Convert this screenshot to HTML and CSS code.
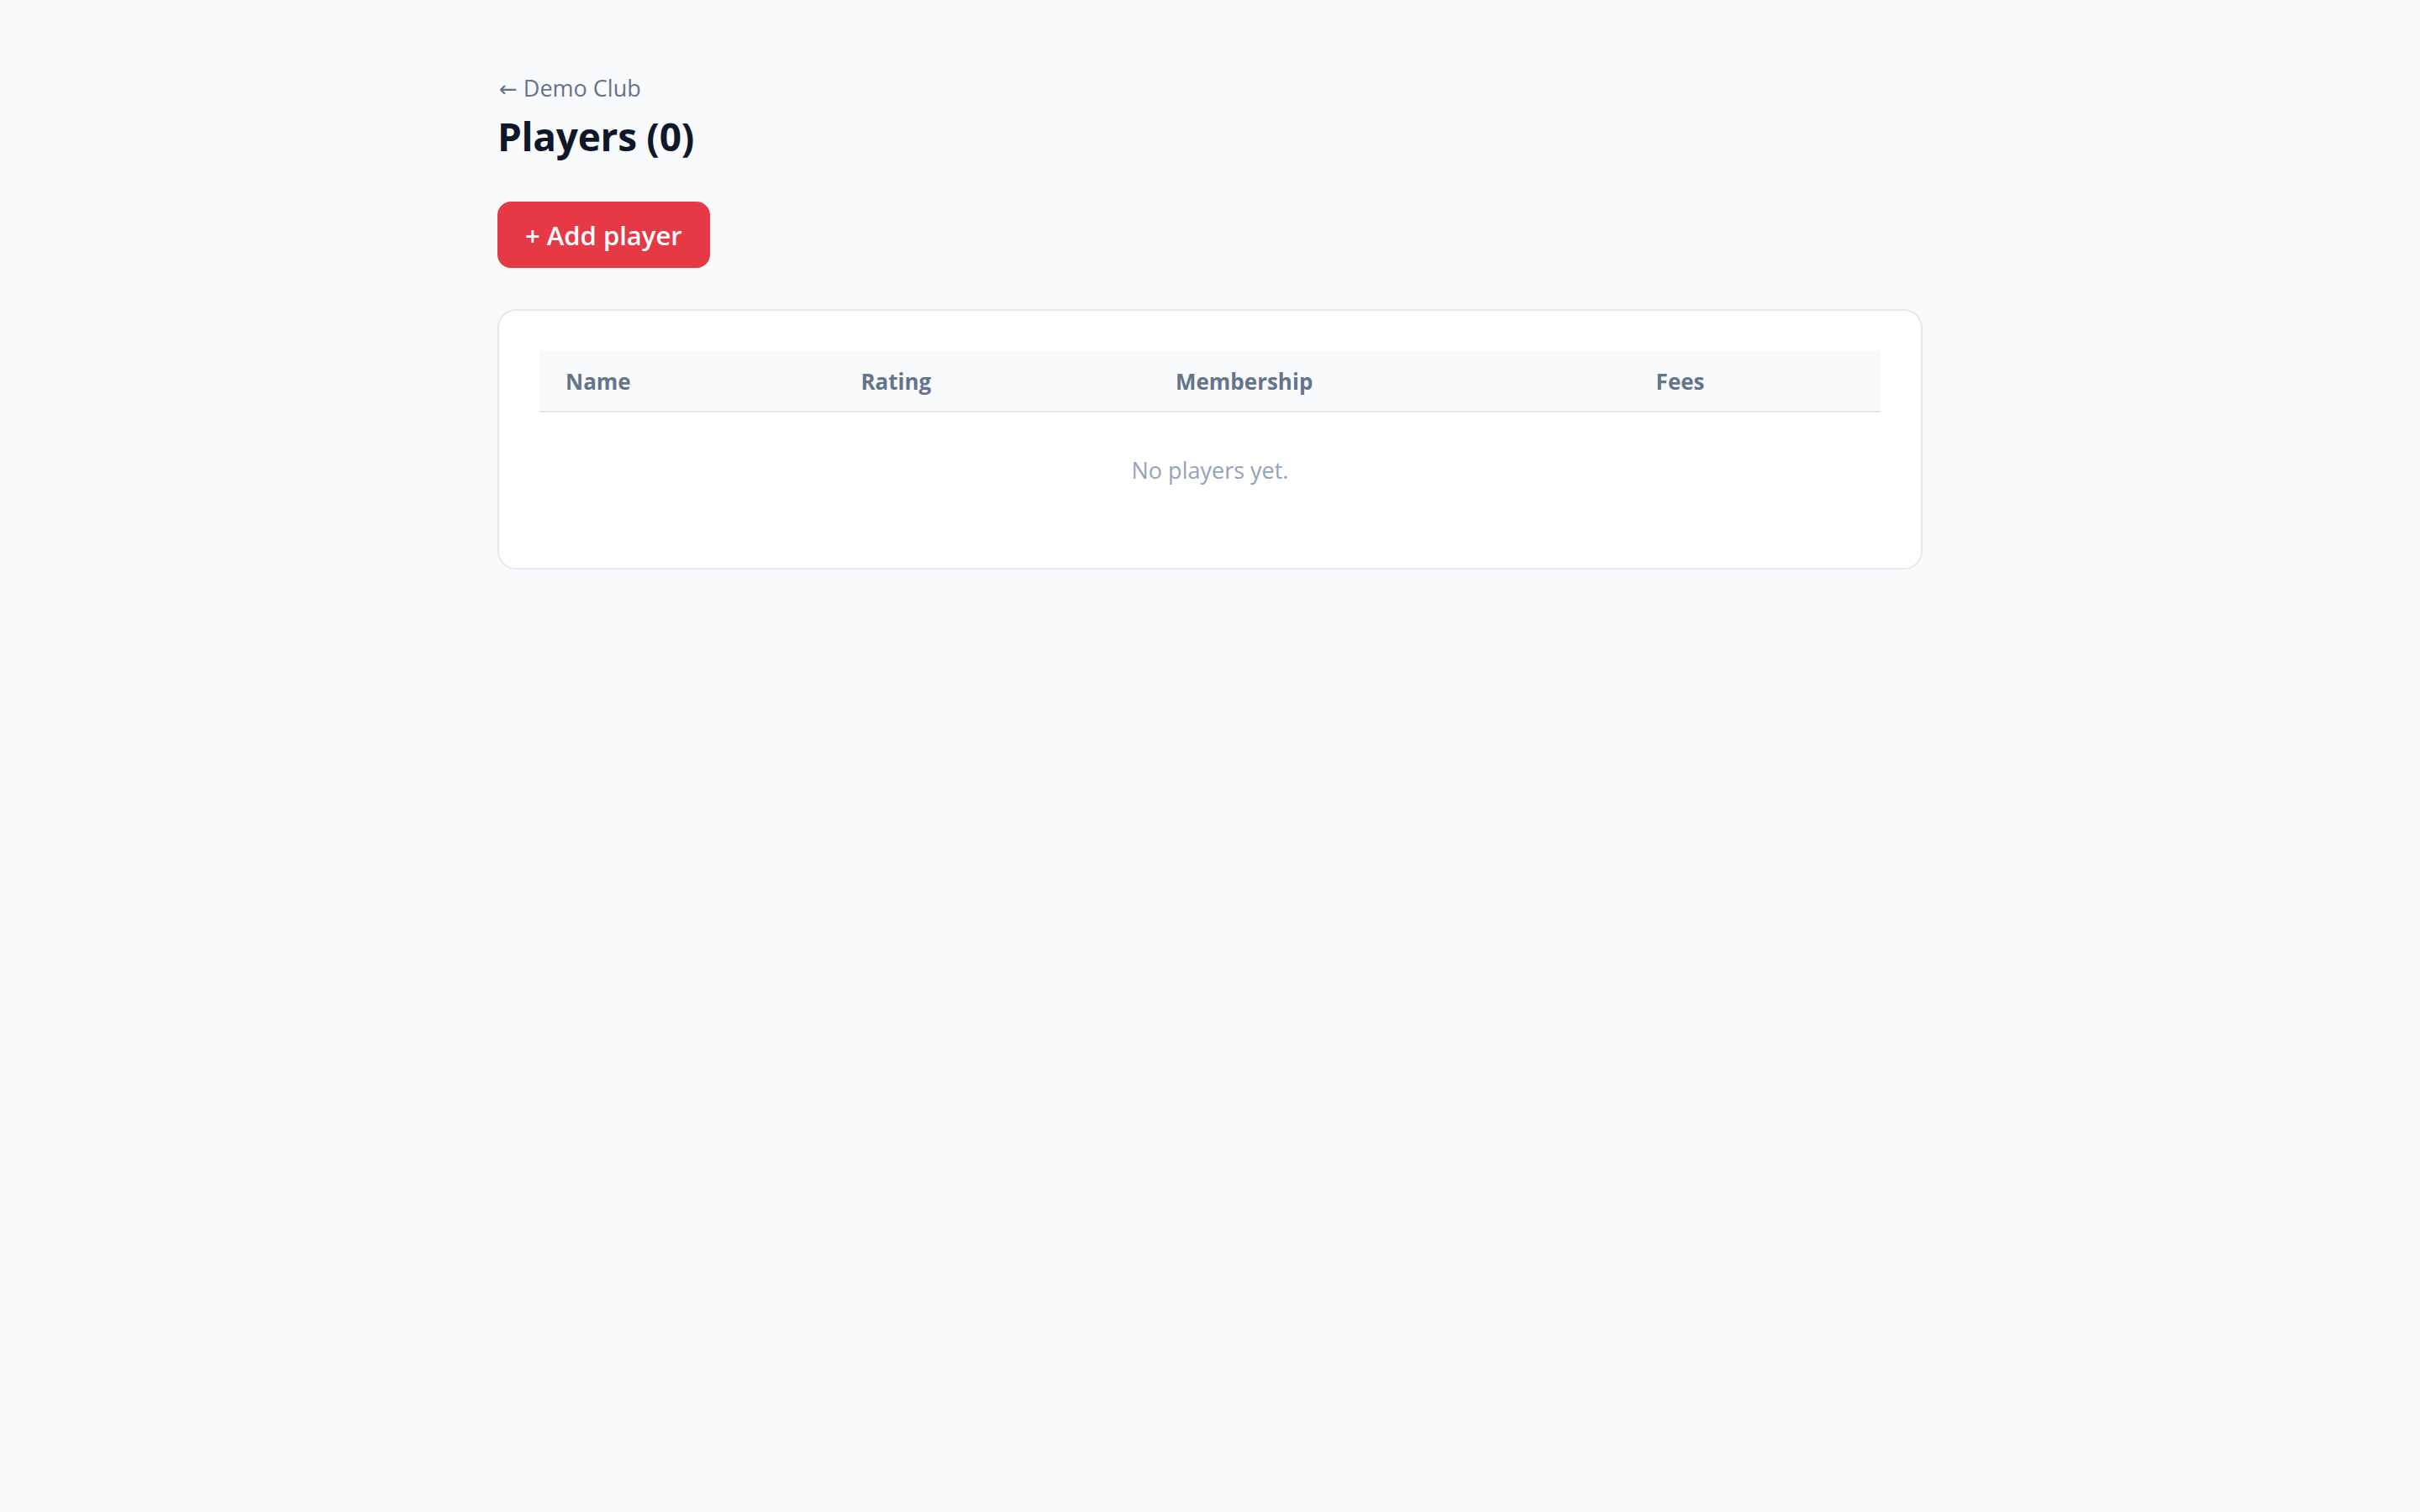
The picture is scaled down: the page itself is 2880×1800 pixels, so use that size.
FILE: index.html
```html
<!DOCTYPE html>
<html lang="en">
<head>
<meta charset="utf-8">
<title>Players</title>
<link rel="stylesheet" href="styles.css">
</head>
<body>
<main class="page">
  <a class="back" href="#"><span class="arrow">←</span> Demo Club</a>
  <h1 class="title">Players (0)</h1>
  <button class="add-btn" type="button">+ Add player</button>
  <section class="card">
    <table class="players">
      <thead>
        <tr>
          <th class="col-name">Name</th>
          <th class="col-rating">Rating</th>
          <th class="col-membership">Membership</th>
          <th class="col-fees">Fees</th>
        </tr>
      </thead>
      <tbody>
        <tr>
          <td class="empty" colspan="4">No players yet.</td>
        </tr>
      </tbody>
    </table>
  </section>
</main>
</body>
</html>
```

FILE: styles.css
```css
html, body {
  margin: 0;
  padding: 0;
  background: #f8fafc;
}
body {
  font-family: "Open Sans", "Noto Sans", "Liberation Sans", sans-serif;
  color: #0f172a;
}
.page {
  width: 1696px;
  margin: 0 auto;
  padding-top: 85px;
  display: flex;
  flex-direction: column;
  align-items: flex-start;
}
.back {
  color: #64748b;
  text-decoration: none;
  font-size: 27px;
  line-height: 40px;
  margin-left: 2px;
}
.arrow {
  font-family: "DejaVu Sans", sans-serif;
  font-size: 26px;
}
.title {
  margin: 6px 0 0 0;
  font-size: 46px;
  line-height: 60px;
  font-weight: 700;
  color: #0f172a;
  letter-spacing: -0.3px;
}
.add-btn {
  margin-top: 48px;
  background: #e63946;
  color: #ffffff;
  border: none;
  border-radius: 16px;
  height: 79px;
  padding: 0 33px;
  font-family: inherit;
  font-size: 31px;
  font-weight: 600;
  cursor: pointer;
}
.card {
  margin-top: 49px;
  width: 100%;
  box-sizing: border-box;
  background: #ffffff;
  border: 2px solid #e2e8f0;
  border-radius: 22px;
  padding: 48px;
}
.players {
  width: 100%;
  border-collapse: collapse;
  table-layout: fixed;
}
.players th {
  background: #f8fafc;
  color: #64748b;
  font-size: 26px;
  font-weight: 700;
  text-align: left;
  height: 72px;
  padding: 0 31px;
  border-bottom: 2px solid #e2e8f0;
  box-sizing: border-box;
}
.col-name { width: 351px; }
.col-rating { width: 374px; }
.col-membership { width: 571px; }
.col-fees { width: 298px; }
.empty {
  text-align: center;
  color: #94a3b8;
  font-size: 27px;
  height: 137px;
  padding: 0;
}
```
